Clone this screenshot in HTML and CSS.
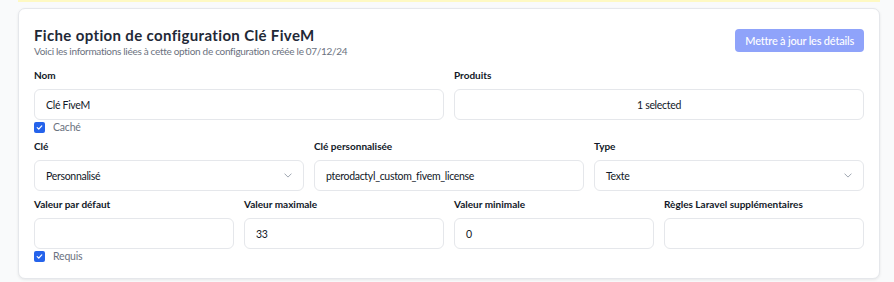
FILE: index.html
```html
<!DOCTYPE html>
<html lang="fr">
<head>
<meta charset="utf-8">
<link rel="stylesheet" href="styles.css">
</head>
<body>
<div class="page">
  <div class="alert-edge"></div>
  <div class="card">
    <div class="head">
      <div>
        <h1 class="title">Fiche option de configuration Clé FiveM</h1>
        <p class="subtitle">Voici les informations liées à cette option de configuration créée le 07/12/24</p>
      </div>
      <button class="btn">Mettre à jour les détails</button>
    </div>

    <div class="grid g2">
      <div class="field">
        <label class="label">Nom</label>
        <div class="input">Clé FiveM</div>
        <div class="check"><span class="box"><svg viewBox="0 0 12 12" width="9" height="9"><path d="M3 6.2l2 2 4-4.4" fill="none" stroke="#fff" stroke-width="1.7" stroke-linecap="round" stroke-linejoin="round"/></svg></span><span class="check-text">Caché</span></div>
      </div>
      <div class="field">
        <label class="label">Produits</label>
        <div class="input center">1 selected</div>
      </div>
    </div>

    <div class="grid g3">
      <div class="field">
        <label class="label">Clé</label>
        <div class="input select">Personnalisé<svg class="chev" viewBox="0 0 10 6" width="8" height="5"><path d="M1 1l4 4 4-4" fill="none" stroke="#9ca3af" stroke-width="1.2" stroke-linecap="round" stroke-linejoin="round"/></svg></div>
      </div>
      <div class="field">
        <label class="label">Clé personnalisée</label>
        <div class="input">pterodactyl_custom_fivem_license</div>
      </div>
      <div class="field">
        <label class="label">Type</label>
        <div class="input select">Texte<svg class="chev" viewBox="0 0 10 6" width="8" height="5"><path d="M1 1l4 4 4-4" fill="none" stroke="#9ca3af" stroke-width="1.2" stroke-linecap="round" stroke-linejoin="round"/></svg></div>
      </div>
    </div>

    <div class="grid g4 last">
      <div class="field">
        <label class="label">Valeur par défaut</label>
        <div class="input"></div>
        <div class="check"><span class="box"><svg viewBox="0 0 12 12" width="9" height="9"><path d="M3 6.2l2 2 4-4.4" fill="none" stroke="#fff" stroke-width="1.7" stroke-linecap="round" stroke-linejoin="round"/></svg></span><span class="check-text">Requis</span></div>
      </div>
      <div class="field">
        <label class="label">Valeur maximale</label>
        <div class="input">33</div>
      </div>
      <div class="field">
        <label class="label">Valeur minimale</label>
        <div class="input">0</div>
      </div>
      <div class="field">
        <label class="label">Règles Laravel supplémentaires</label>
        <div class="input"></div>
      </div>
    </div>
  </div>
</div>
</body>
</html>
```

FILE: styles.css
```css
* { box-sizing: border-box; }
html, body { margin: 0; padding: 0; }
body {
  background: #f9fafb;
  font-family: "Lato", "Noto Sans", sans-serif;
  color: #111827;
  width: 894px;
  height: 282px;
  overflow: hidden;
}
.page {
  padding: 0 14px 0 18px;
}
.alert-edge {
  height: 2px;
  background: #fef9c3;
  margin-bottom: 6px;
  width: 862px;
}
.card {
  width: 862px;
  background: #fff;
  border: 1px solid #e5e7eb;
  border-radius: 7px;
  box-shadow: 0 1px 3px rgba(0,0,0,0.08);
  padding: 17px 15px 16px 15px;
}
.head {
  display: flex;
  justify-content: space-between;
  align-items: flex-start;
  margin-bottom: 10px;
}
.title {
  margin: 0;
  font-size: 15px;
  font-weight: 700;
  letter-spacing: 0.35px;
  line-height: 18px;
  color: #1f2937;
}
.subtitle {
  margin: 0;
  font-size: 10px;
  letter-spacing: -0.3px;
  line-height: 14px;
  color: #6b7280;
}
.btn {
  margin-top: 3px;
  height: 23px;
  padding: 0 10px;
  border: none;
  border-radius: 4px;
  background: #8fa3fa;
  color: #fff;
  font-family: inherit;
  font-size: 11px;
  letter-spacing: -0.2px;
  font-weight: 500;
}
.grid {
  display: grid;
  gap: 10px;
  margin-bottom: 6px;
}
.grid.last { margin-bottom: 0; }
.g2 { grid-template-columns: 1fr 1fr; }
.g3 { grid-template-columns: 1fr 1fr 1fr; }
.g4 { grid-template-columns: 1fr 1fr 1fr 1fr; }
.field {
  display: flex;
  flex-direction: column;
}
.label {
  font-size: 10px;
  font-weight: 700;
  line-height: 14px;
  color: #111827;
  margin-bottom: 7px;
}
.input {
  height: 31px;
  border: 1px solid #e5e7eb;
  border-radius: 6px;
  padding: 0 11px;
  display: flex;
  align-items: center;
  font-size: 10.5px;
  letter-spacing: -0.3px;
  color: #111827;
}
.input.center { justify-content: center; }
.input.select { justify-content: space-between; }
.check {
  display: flex;
  align-items: center;
  gap: 8px;
  margin-top: 1px;
  height: 12px;
}
.box {
  width: 11px;
  height: 11px;
  border-radius: 2px;
  background: #2563eb;
  display: flex;
  align-items: center;
  justify-content: center;
}
.check-text {
  font-size: 10.5px;
  letter-spacing: -0.2px;
  color: #6b7280;
}
```
